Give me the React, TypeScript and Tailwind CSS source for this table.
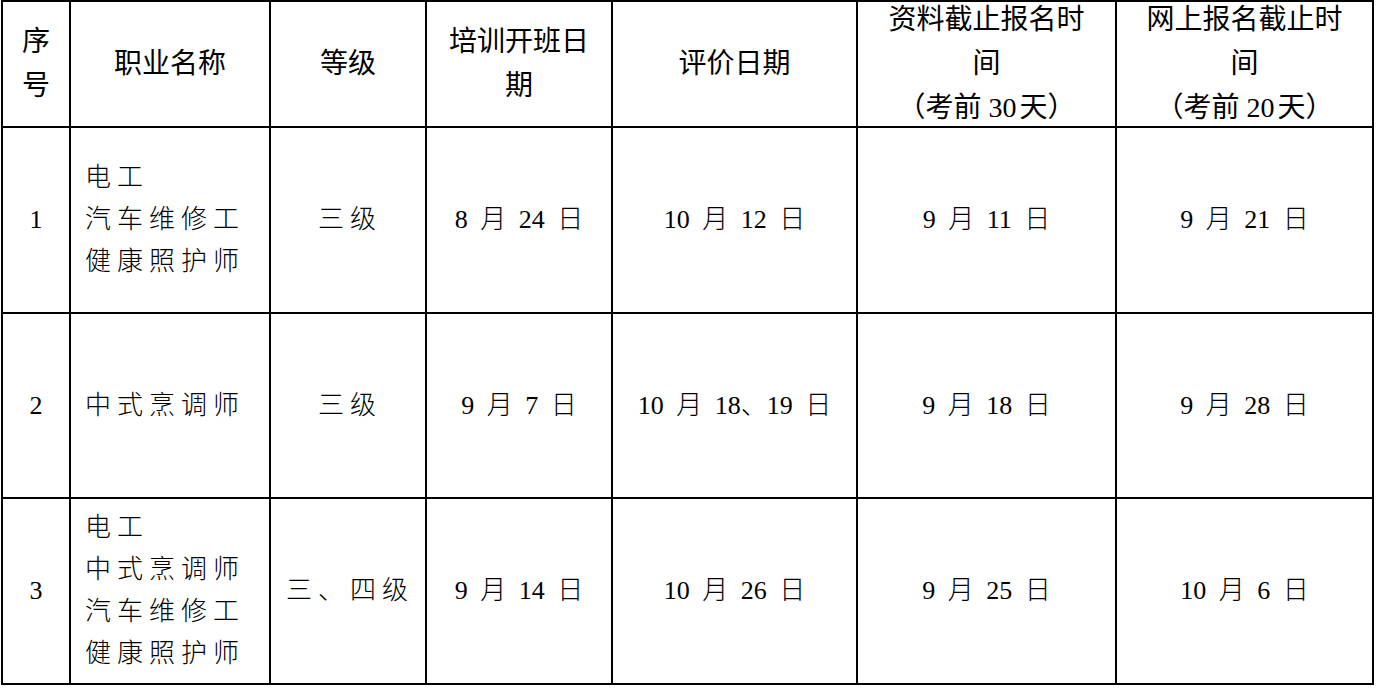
import React from "react"

interface Row {
  no: string
  names: string[]
  level: string
  start: string
  exam: string
  docDeadline: string
  webDeadline: string
}

const rows: Row[] = [
  {
    no: "1",
    names: ["电工", "汽车维修工", "健康照护师"],
    level: "三级",
    start: "8 月 24 日",
    exam: "10 月 12 日",
    docDeadline: "9 月 11 日",
    webDeadline: "9 月 21 日",
  },
  {
    no: "2",
    names: ["中式烹调师"],
    level: "三级",
    start: "9 月 7 日",
    exam: "10 月 18、19 日",
    docDeadline: "9 月 18 日",
    webDeadline: "9 月 28 日",
  },
  {
    no: "3",
    names: ["电工", "中式烹调师", "汽车维修工", "健康照护师"],
    level: "三、四级",
    start: "9 月 14 日",
    exam: "10 月 26 日",
    docDeadline: "9 月 25 日",
    webDeadline: "10 月 6 日",
  },
]

function HeadCell({ children }: { children: React.ReactNode }) {
  return (
    <div className="bg-white flex items-center justify-center text-center text-[28px] leading-[44px] text-black font-['Liberation_Serif','Noto_Sans_CJK_SC',sans-serif]">
      <div className="whitespace-nowrap">{children}</div>
    </div>
  )
}

// dates: digits sit tight, spaces around CJK are widened
function DateCell({ children }: { children: React.ReactNode }) {
  return (
    <div className="bg-white flex items-center justify-center text-center text-[26px] leading-[42px] text-black font-light whitespace-nowrap [word-spacing:6px] font-['Liberation_Serif','Noto_Sans_CJK_SC',serif]">
      {children}
    </div>
  )
}

function TextCell({ children }: { children: React.ReactNode }) {
  return (
    <div className="bg-white flex items-center justify-center text-center text-[26px] leading-[42px] text-black font-light whitespace-nowrap tracking-[6px] pl-[4px] font-['Liberation_Serif','Noto_Sans_CJK_SC',serif]">
      {children}
    </div>
  )
}

export default function App() {
  return (
    <div className="w-[1376px] h-[688px] bg-white">
      <div className="grid grid-cols-[66px_198px_154px_184px_243px_257px_255px] grid-rows-[124px_184px_183px_184px] gap-[2px] p-[2px] bg-black w-[1373px] ml-px">
        <HeadCell>
          序<br />号
        </HeadCell>
        <HeadCell>职业名称</HeadCell>
        <HeadCell>等级</HeadCell>
        <HeadCell>
          培训开班日<br />期
        </HeadCell>
        <HeadCell>评价日期</HeadCell>
        <HeadCell>
          资料截止报名时<br />间<br />（考前 30<span className="ml-[3px]">天</span>）
        </HeadCell>
        <HeadCell>
          网上报名截止时<br />间<br />（考前 20<span className="ml-[3px]">天</span>）
        </HeadCell>

        {rows.map((r) => (
          <React.Fragment key={r.no}>
            <DateCell>{r.no}</DateCell>
            <div className="bg-white flex flex-col justify-center pl-[14px] text-[26px] leading-[42px] text-black font-light tracking-[6px] whitespace-nowrap font-['Liberation_Serif','Noto_Sans_CJK_SC',serif]">
              {r.names.map((n) => (
                <div key={n}>{n}</div>
              ))}
            </div>
            <TextCell>{r.level}</TextCell>
            <DateCell>{r.start}</DateCell>
            <DateCell>{r.exam}</DateCell>
            <DateCell>{r.docDeadline}</DateCell>
            <DateCell>{r.webDeadline}</DateCell>
          </React.Fragment>
        ))}
      </div>
    </div>
  )
}
